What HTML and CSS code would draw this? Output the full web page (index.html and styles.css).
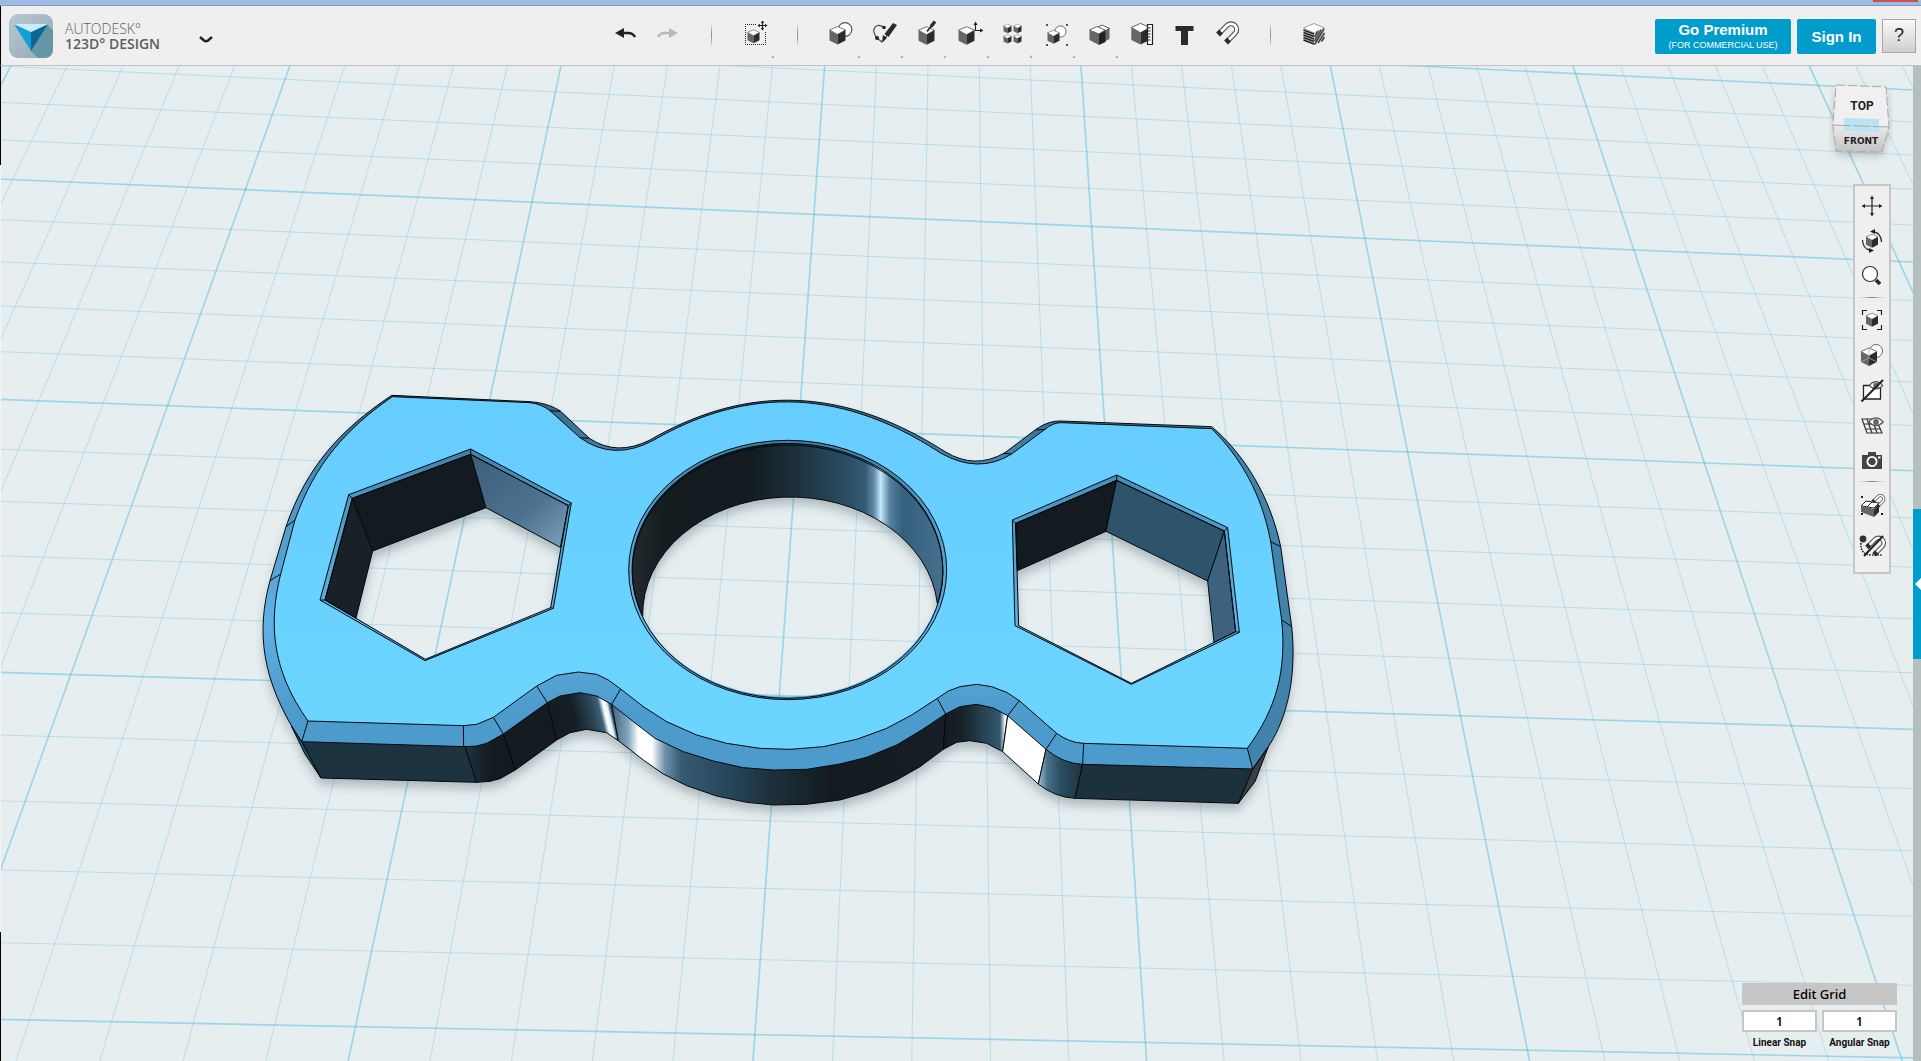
FILE: index.html
```html
<!DOCTYPE html>
<html lang="en">
<head>
<meta charset="utf-8">
<title>Autodesk 123D Design</title>
<link rel="stylesheet" href="styles.css">
</head>
<body>
<svg class="defs" aria-hidden="true">
  <defs>
    <g id="cube">
      <path d="M0-9 8-5.500 0-1-8-5.500Z" fill="#fff" stroke="#555" stroke-width=".8"/>
      <path d="M-8-5.500 0-1V9L-8 5Z" fill="#666"/>
      <path d="M8-5.500 0-1V9L8 5Z" fill="#2b2b2b"/>
    </g>
    <g id="eye">
      <path d="M-8 0Q0-9 8 0 0 8-8 0Z" fill="#fff" stroke="#555" stroke-width="1.300"/>
      <circle r="3.200" fill="#666"/>
    </g>
    <g id="magnet">
      <path d="M-8 4 0-4A5.600 5.600 0 0 1 8 4L0 12" fill="none" stroke="#555" stroke-width="5.200"/>
      <path d="M-8 4 0-4A5.600 5.600 0 0 1 8 4L0 12" fill="none" stroke="#fff" stroke-width="2.800"/>
      <path d="M-9 5-6 2M-1 13 2 10" stroke="#2b2b2b" stroke-width="5.400"/>
    </g>
    <path id="more" d="M41 44v3h-3Z" fill="#aaa"/>
  </defs>
</svg>

<div class="titlebar"><span class="close-edge"></span></div>

<header class="toolbar">
  <div class="brand">
    <svg class="logo" viewBox="0 0 44 44" aria-hidden="true">
      <defs><linearGradient id="lg" x1="0" y1="0" x2="1" y2="1"><stop offset="0" stop-color="#b9c8d0"/><stop offset="1" stop-color="#93a9b5"/></linearGradient></defs>
      <rect width="44" height="44" rx="9" fill="url(#lg)"/>
      <path d="M38 11 44 16V35Q44 44 35 44H29L21 36Z" fill="#6496a8"/>
      <path d="M5 10 22 18V37Z" fill="#129fd9"/>
      <path d="M39 10 22 18V37Z" fill="#0b6690"/>
      <path d="M5 10H39L22 18Z" fill="#c6ecf8"/>
    </svg>
    <div class="brand-text"><span class="maker">AUTODESK°</span><span class="product">123D° DESIGN</span></div>
    <button class="app-menu" aria-label="Application menu"><svg viewBox="0 0 14 7"><path d="M1 1 5 4.500Q7 6 9 4.500L13 1" fill="none" stroke="#222" stroke-width="2.400"/></svg></button>
  </div>

  <nav class="tools" aria-label="Tools">
    <button aria-label="Undo"><svg viewBox="0 0 43 50"><path d="M11 22 20 17V27Z" fill="#222"/><path d="M19 22H24Q29 22 31 26" fill="none" stroke="#222" stroke-width="2.600"/></svg></button>
    <button aria-label="Redo"><svg viewBox="0 0 43 50"><path d="M31 22 22 17V27Z" fill="#b8b8b8"/><path d="M23 22H18Q13 22 11 26" fill="none" stroke="#b8b8b8" stroke-width="2.600"/></svg></button>
    <span class="sep"></span>
    <button aria-label="Transform"><svg viewBox="0 0 43 50"><path d="M23 13.500H12.500V33.500H32.500V21" fill="none" stroke="#222" stroke-dasharray="1 1"/><use href="#cube" transform="translate(20.500 25.500) scale(.75)"/><path d="M29.500 10V19M25 14.500H34" stroke="#222" stroke-width="1.200"/><path d="M29.500 9.500 27.800 12H31.200ZM29.500 19.500 27.800 17H31.200ZM24.500 14.500 27 12.800V16.200ZM34.500 14.500 32 12.800V16.200Z" fill="#222"/><use href="#more"/></svg></button>
    <span class="sep"></span>
    <button aria-label="Primitives"><svg viewBox="0 0 43 50"><circle cx="26" cy="18.500" r="6.800" fill="#fff" stroke="#555" stroke-width="1.200"/><use href="#cube" transform="translate(18.500 24.500)"/><use href="#more"/></svg></button>
    <button aria-label="Sketch"><svg viewBox="0 0 43 50"><path d="M22 16Q14 12 12 18 11 22 15 27L20 31Q24 28 25 23" fill="none" stroke="#444" stroke-width="1.200"/><circle cx="22" cy="16.500" r="1.800" fill="#222"/><circle cx="15" cy="27" r="2" fill="#222"/><path d="M20 31 21 24 25 27Z" fill="#222"/><path d="M22.500 23 31 12 35 14 26.500 26Z" fill="#2b2b2b"/><use href="#more"/></svg></button>
    <button aria-label="Construct"><svg viewBox="0 0 43 50"><use href="#cube" transform="translate(21.500 24.700)"/><path d="M22 20.500 27 14.500" stroke="#222" stroke-width="1.600"/><path d="M26 15.500 30 10.500" stroke="#2b2b2b" stroke-width="3.400"/><use href="#more"/></svg></button>
    <button aria-label="Modify"><svg viewBox="0 0 43 50"><use href="#cube" transform="translate(18.500 24.700)"/><path d="M27.500 12V19.500H34" fill="none" stroke="#222" stroke-width="1.100"/><path d="M27.500 10.500 25.500 14H29.500ZM35.500 19.500 32 17.500V21.500Z" fill="#222"/><use href="#more"/></svg></button>
    <button aria-label="Pattern"><svg viewBox="0 0 43 50"><use href="#cube" transform="translate(16.500 17.700) scale(.5)"/><use href="#cube" transform="translate(26.500 17.700) scale(.5)"/><use href="#cube" transform="translate(16.500 28) scale(.5)"/><use href="#cube" transform="translate(26.500 28) scale(.5)"/><use href="#more"/></svg></button>
    <button aria-label="Grouping"><svg viewBox="0 0 43 50"><path d="M12 13h2v2h-2ZM32 13h2v2h-2ZM12 33h2v2h-2ZM32 33h2v2h-2Z" fill="#555"/><circle cx="26.500" cy="20.500" r="5.600" fill="#fff" stroke="#666"/><use href="#cube" transform="translate(19.500 26) scale(.75)"/><use href="#more"/></svg></button>
    <button aria-label="Combine"><svg viewBox="0 0 43 50"><path d="M19 17 25 14 32.500 17V28L25 32Z" fill="#666"/><path d="M18 17.500 25 14 32.500 17.500 26 20.500Z" fill="#fff" stroke="#444" stroke-width=".8"/><path d="M12.500 19 20 15.500 28 19 22 23Z" fill="#fff" stroke="#444" stroke-width=".8"/><path d="M12.500 19.500 22 23V34L12.500 29Z" fill="#666"/><path d="M22 23 28.500 20V31L22 34Z" fill="#222"/><use href="#more"/></svg></button>
    <button aria-label="Measure"><svg viewBox="0 0 43 50"><use href="#cube" transform="translate(20.500 23) scale(1.150 1.180)"/><path d="M27.500 13.500H32.500V33.500H27.500Z" fill="#fff" stroke="#222" stroke-width="1.200"/><path d="M28 17H30.500M28 20H30.500M28 23H30.500M28 26H30.500M28 29H30.500" stroke="#222"/></svg></button>
    <button aria-label="Text"><svg viewBox="0 0 43 50"><rect x="12.500" y="15" width="18" height="5" fill="#2b2b2b"/><rect x="18" y="19" width="7" height="15" fill="#2b2b2b"/></svg></button>
    <button aria-label="Snap"><svg viewBox="0 0 43 50"><use href="#magnet" transform="translate(21 18.500)"/></svg></button>
    <span class="sep"></span>
    <button aria-label="Material"><svg viewBox="0 0 43 50"><path d="M11.500 17 22 12.500 32.500 17 22 22Z" fill="#fff" stroke="#888" stroke-width=".8"/><path d="M11.500 18 22 22V34L11.500 29Z" fill="#ccc"/><path d="M22 22 32.500 18V29L22 34Z" fill="#ddd"/><path d="M11.500 19 22 23M11.500 21.500 22 25.500M11.500 24 22 28M11.500 26.500 22 30.500M11.500 29 22 33" stroke="#222" stroke-width="1.400"/><path d="M22.500 26 26 20M22.500 30 29 19M22.500 33.500 32 18M26 32 32.500 22M29.500 30.500 32.500 26" stroke="#444" stroke-width="1.500"/></svg></button>
  </nav>

  <div class="account">
    <button class="cta premium"><span>Go Premium</span><small>(FOR COMMERCIAL USE)</small></button>
    <button class="cta signin">Sign In</button>
    <button class="help" aria-label="Help">?</button>
  </div>
</header>

<main class="workspace">
  <div class="canvas">
    <svg class="scene" viewBox="0 198 5739 2985" preserveAspectRatio="xMidYMid slice" role="img" aria-label="Model on the work plane">
      <defs>
        <linearGradient id="rim" gradientUnits="userSpaceOnUse" x1="0" y1="1200" x2="0" y2="2300"><stop offset="0" stop-color="#35698a"/><stop offset=".25" stop-color="#4d92bf"/><stop offset=".6" stop-color="#60b1e4"/><stop offset=".85" stop-color="#4d9bcc"/></linearGradient>
        <linearGradient id="face" x1="0" y1="0" x2="0" y2="1"><stop offset="0" stop-color="#66cdff"/><stop offset="1" stop-color="#6cd5ff"/></linearGradient>
        <linearGradient id="hexShine" x1="0" y1="0" x2="1" y2="1"><stop offset="0" stop-color="#3c5f79"/><stop offset=".6" stop-color="#4d7290"/><stop offset="1" stop-color="#7ba2bf"/></linearGradient>
        <linearGradient id="bore"><stop offset="0" stop-color="#242b2d"/><stop offset=".1" stop-color="#161d21"/><stop offset=".38" stop-color="#131b20"/><stop offset=".5" stop-color="#1b2c36"/><stop offset=".66" stop-color="#28485b"/><stop offset=".75" stop-color="#345a74"/><stop offset=".78" stop-color="#6690ae"/><stop offset=".8" stop-color="#c4e8fa"/><stop offset=".83" stop-color="#55809e"/><stop offset=".87" stop-color="#34607c"/><stop offset="1" stop-color="#47708f"/></linearGradient>
        <linearGradient id="w2"><stop offset="0" stop-color="#1e3442"/><stop offset=".5" stop-color="#131b20"/></linearGradient>
        <linearGradient id="w4" gradientUnits="userSpaceOnUse" x1="1642" y1="2190" x2="1856" y2="2140"><stop offset="0" stop-color="#131b20"/><stop offset=".4" stop-color="#151f25"/><stop offset=".65" stop-color="#294656"/><stop offset=".76" stop-color="#3d6078"/><stop offset=".82" stop-color="#fff"/><stop offset=".87" stop-color="#dff3ff"/><stop offset=".91" stop-color="#31536a"/><stop offset="1" stop-color="#31536a"/></linearGradient>
        <linearGradient id="w5"><stop offset="0" stop-color="#41647c"/><stop offset=".05" stop-color="#84a8bf"/><stop offset=".08" stop-color="#fff"/><stop offset=".12" stop-color="#fff"/><stop offset=".16" stop-color="#6c91aa"/><stop offset=".21" stop-color="#365a72"/><stop offset=".35" stop-color="#27465a"/><stop offset=".48" stop-color="#1d303b"/><stop offset=".65" stop-color="#131b20"/><stop offset="1" stop-color="#181e26"/></linearGradient>
        <linearGradient id="w6"><stop offset="0" stop-color="#131b20"/><stop offset=".3" stop-color="#172229"/><stop offset=".6" stop-color="#25404f"/><stop offset=".88" stop-color="#34586f"/><stop offset=".96" stop-color="#f4fbff"/></linearGradient>
        <linearGradient id="w8"><stop offset="0" stop-color="#9fc6e0"/><stop offset=".2" stop-color="#4a7089"/><stop offset=".5" stop-color="#2b4d62"/><stop offset="1" stop-color="#1e3340"/></linearGradient>
        <filter id="shadow" x="-10%" y="-10%" width="120%" height="125%"><feDropShadow dx="0" dy="22" stdDeviation="14" flood-color="#3a4850" flood-opacity=".3"/></filter>
      </defs>

      <g id="grid" class="grid"></g>

      <g class="model">
        <path class="body" filter="url(#shadow)" fill="url(#rim)" fill-rule="evenodd" d="M1175 1186 1590 1205Q1640 1208 1680 1232L1768 1315Q1850 1370 1950 1320C2210 1170 2500 1140 2835 1355Q2925 1410 3015 1358L3108 1288Q3145 1262 3180 1263L3635 1280C3735 1365 3810 1490 3842 1640L3875 1880C3890 2020 3865 2150 3805 2240L3765 2345 3715 2410 3225 2395Q3165 2392 3115 2352L3008 2255 2960 2230 2910 2222 2870 2227 2830 2248 2760 2300 2690 2340 2610 2374 2520 2400 2420 2413 2320 2415 2240 2407 2150 2388 2060 2357 1990 2322 1930 2280 1855 2222 1820 2198 1760 2188 1710 2198 1670 2220 1546 2310 1500 2336 1470 2344 1430 2347 963 2334 910 2255 890 2205C785 2040 770 1890 810 1742L858 1580C920 1400 1020 1290 1175 1186Z
          M1458 1523 1681 1642 1652 1823 1276 1976 1068 1854 1118 1653Z
          M3318 1594 3623 1743 3642 1927 3394 2050 3056 1877 3052 1712Z
          M1928 1848A443 352 0 0 1 2812 1810 466 380 0 0 1 1928 1848Z"/>
        <path fill="#4283ac" d="M3635 1280C3735 1365 3810 1490 3842 1640L3875 1880C3890 2020 3865 2150 3805 2240L3758 2307 3742 2245C3830 2125 3860 2010 3845 1860L3812 1625C3785 1480 3720 1370 3635 1286Z"/>
        <g class="edge">
          <path fill="#1e3340" d="M905 2225 1395 2240 1430 2347 963 2334Z"/>
          <path fill="#2a5570" d="M875 2180 905 2225 963 2334 915 2262Z"/>
          <path fill="url(#w2)" d="M1395 2240 1430 2238 1460 2230 1510 2202 1546 2310 1500 2336 1470 2344 1430 2347Z"/>
          <path fill="#131b20" d="M1510 2202 1642 2108 1670 2220 1546 2310Z"/>
          <path fill="url(#w4)" d="M1642 2108 1680 2088 1740 2078 1790 2088 1835 2113 1855 2222 1820 2198 1760 2188 1710 2198 1670 2220Z"/>
          <path fill="url(#w5)" d="M1835 2113 1900 2165 1965 2215 2050 2255 2140 2283 2230 2303 2320 2310 2420 2308 2520 2292 2600 2272 2690 2235 2765 2190 2837 2142 2830 2248 2760 2300 2690 2340 2610 2374 2520 2400 2420 2413 2320 2415 2240 2407 2150 2388 2060 2357 1990 2322 1930 2280 1855 2222Z"/>
          <path fill="url(#w6)" d="M2837 2142 2880 2120 2930 2113 2980 2124 3023 2147 3008 2255 2960 2230 2910 2222 2870 2227 2830 2248Z"/>
          <path fill="#fff" d="M3023 2147 3138 2248 3115 2352 3008 2255Z"/>
          <path fill="url(#w8)" d="M3138 2248Q3190 2291 3248 2293L3225 2395Q3165 2392 3115 2352Z"/>
          <path fill="#1d313d" d="M3248 2293 3758 2307 3715 2410 3225 2395Z"/>
          <path fill="#3a3f42" d="M3758 2307 3805 2240 3765 2345 3715 2410Z"/>

          <path fill="#131b20" d="M1412 1363 1458 1523 1118 1653 1057 1495Z"/>
          <path fill="#182127" d="M1057 1495 1118 1653 1068 1854 975 1800Z"/>
          <path fill="url(#hexShine)" d="M1412 1363 1458 1523 1681 1642 1705 1517Z"/>
          <path fill="#131b20" d="M3350 1441 3318 1594 3052 1712 3047 1570Z"/>
          <path fill="#2e546c" d="M3350 1441 3673 1593 3623 1743 3318 1594Z"/>
          <path fill="#3c6280" d="M3673 1593 3707 1895 3642 1927 3623 1743Z"/>
          <path fill="url(#bore)" d="M1928 1848A466 380 0 1 1 2812 1810 443 352 0 0 0 1928 1848Z"/>

          <path fill="url(#face)" fill-rule="evenodd" d="M1177 1190 1590 1208Q1625 1212 1650 1232L1740 1313Q1840 1385 1960 1321C2215 1174 2500 1148 2820 1358Q2935 1424 3035 1362L3135 1288Q3160 1267 3185 1268L3635 1286C3720 1370 3785 1480 3812 1625L3845 1860C3860 2010 3830 2125 3742 2245L3250 2230Q3208 2228 3170 2200L3058 2102 3020 2077 2975 2060 2930 2053 2880 2060 2845 2073 2812 2095 2735 2145 2660 2185 2570 2218 2470 2240 2370 2248 2280 2245 2180 2230 2090 2205 2000 2165 1930 2120 1862 2067 1825 2040 1790 2023 1735 2016 1670 2026 1610 2058 1480 2152 1430 2173 1390 2177 924 2163C815 2010 805 1870 842 1722L885 1560C945 1390 1040 1285 1177 1190Z
            M1412 1347 1714 1509 1660 1825 1275 1982 960 1800 1046 1484Z
            M3350 1425 3683 1583 3718 1897 3394 2053 3045 1877 3037 1560Z
            M1886 1710A477 389 0 1 1 2840 1710 477 389 0 1 1 1886 1710Z"/>

          <path fill="none" d="M905 2225C780 2040 770 1890 810 1742L858 1580C920 1400 1020 1290 1175 1186L1590 1205Q1640 1208 1680 1232L1768 1315Q1850 1370 1950 1320C2210 1170 2500 1140 2835 1355Q2925 1410 3015 1358L3108 1288Q3145 1262 3180 1263L3635 1280C3735 1365 3810 1490 3842 1640L3875 1880C3890 2020 3865 2150 3805 2240L3758 2307"/>
          <path fill="none" d="M1412 1363 1705 1517 1652 1823 1276 1978 975 1800 1057 1495ZM3350 1441 3673 1593 3707 1895 3394 2050 3056 1877 3047 1570Z"/>
          <ellipse fill="none" cx="2363" cy="1715" rx="466" ry="380"/>
          <path fill="none" d="M924 2163 905 2225M1390 2177 1391 2240M1480 2152 1510 2202M1610 2058 1642 2108M1862 2067 1835 2113M2812 2095 2837 2142M3058 2102 3023 2147M3170 2200 3138 2248M3251 2230 3248 2293M3742 2245 3758 2307M842 1722 810 1742M885 1560 858 1580M3812 1625 3842 1640M3845 1860 3875 1880M1650 1232 1680 1234M1740 1313 1768 1315M3035 1362 3012 1360M3135 1288 3108 1290M1412 1347V1363M1046 1484 1057 1495M960 1800H975M1714 1509 1705 1517M1660 1825 1652 1823M3350 1425V1441M3683 1583 3673 1593M3718 1897 3707 1895M3037 1560 3047 1570"/>
        </g>
      </g>
    </svg>

    <svg class="viewcube" viewBox="0 0 64 84" role="img" aria-label="View cube">
      <defs>
        <linearGradient id="vc" x1="0" y1="0" x2="0" y2="1"><stop offset="0" stop-color="#ececec"/><stop offset="1" stop-color="#c2c2c2"/></linearGradient>
        <filter id="vs" x="-20%" y="-20%" width="140%" height="150%"><feDropShadow dx="0" dy="4" stdDeviation="4" flood-opacity=".2"/></filter>
      </defs>
      <path filter="url(#vs)" d="M7 5 57 7 60 47 53 72 7 71 4 45Z" fill="#ccc"/>
      <path d="M7 5 57 7 60 47 4 45Z" fill="#f0f0f0"/>
      <path d="M4 45 60 47 53 72 7 71Z" fill="url(#vc)"/>
      <path d="M15 38 50 39V52L15 51Z" fill="#b9e4f2"/>
      <path d="M7 5 57 7 60 47 53 72 7 71 4 45Z" fill="none" stroke="#aaa" stroke-dasharray="9 3"/>
      <path d="M4 45 60 47" stroke="#aaa" stroke-dasharray="18 2"/>
      <text class="top" x="33" y="30">TOP</text>
      <text class="front" x="32" y="64">FRONT</text>
    </svg>

    <div class="navbar" role="toolbar" aria-label="Navigation">
      <button aria-label="Pan"><svg viewBox="-17 -17 34 34"><path d="M0-8V8M-8 0H8" stroke="#222" stroke-width="1.200"/><path d="M0-10.500-2-7H2ZM0 10.500-2 7H2ZM-10.500 0-7-2V2ZM10.500 0 7-2V2Z" fill="#222"/></svg></button>
      <button aria-label="Orbit"><svg viewBox="-17 -17 34 34"><use href="#cube" transform="scale(.75)"/><path d="M2-9Q9-8 9.500 1M-2 9Q-9 8-9.500-1" fill="none" stroke="#333" stroke-width="1.300"/><path d="M-2-9.500 3-12V-7ZM2 9.500-3 7V12Z" fill="#222"/></svg></button>
      <button aria-label="Zoom"><svg viewBox="-17 -17 34 34"><circle cx="-2" cy="-2" r="7.500" fill="#fff" stroke="#333" stroke-width="1.200"/><path d="M4 4 8 8" stroke="#2b2b2b" stroke-width="3.800"/></svg></button>
      <span class="rule"></span>
      <button aria-label="Fit"><svg viewBox="-17 -17 34 34"><path d="M-9.500-5V-9.500H-5M5-9.500H9.500V-5M9.500 5V9.500H5M-5 9.500H-9.500V5" fill="none" stroke="#222" stroke-width="1.200"/><use href="#cube" transform="scale(.75)"/></svg></button>
      <button aria-label="Shading"><svg viewBox="-17 -17 34 34"><circle cx="4" cy="-4" r="6.500" fill="#fff" stroke="#666"/><use href="#cube" transform="translate(-3 2)"/><path d="M-11 7-3 3 5 7M-3 3V-7" fill="none" stroke="#aaa" stroke-width=".8"/></svg></button>
      <button aria-label="Solid visibility"><svg viewBox="-17 -17 34 34"><path d="M-8.500-4.500H8.500V9H-8.500Z" fill="#fff" stroke="#222" stroke-width="1.300"/><use href="#eye" transform="translate(4 -4.500) scale(.85)"/><path d="M-10.500 11.500 11-10" stroke="#222" stroke-width="2"/></svg></button>
      <button aria-label="Grid visibility"><svg viewBox="-17 -17 34 34"><path d="M-10-6H4L10 8H-5ZM-8-1H8M-6 4H9M-5-6 0 8M0-6 5 8" fill="none" stroke="#333" stroke-width="1.200"/><use href="#eye" transform="translate(4 -3) scale(.9)"/></svg></button>
      <button aria-label="Screenshot"><svg viewBox="-17 -17 34 34"><path d="M-10-5H-4V-8H4V-5H10V9H-10Z" fill="#444"/><circle cy="1.500" r="4.600" fill="#444" stroke="#fff" stroke-width="1.800"/><rect x="6" y="-3.500" width="2.500" height="2" fill="#fff"/></svg></button>
      <span class="rule"></span>
      <button class="tall" aria-label="Object snap"><svg viewBox="-17 -17 34 34"><path d="M-11-10h2v2h-2ZM-11 7h2v2h-2ZM9 7h2v2H9Z" fill="#222"/><path d="M-11 0-6-5 7-3 2 2Z" fill="#fff" stroke="#222"/><path d="M-5 1 0-4" stroke="#222"/><path d="M-11 0 2 3V11L-11 6Z" fill="#666"/><path d="M2 3 7-2V6L2 11Z" fill="#2b2b2b"/><use href="#magnet" transform="translate(6 -7) scale(.6)"/></svg></button>
      <button class="tall" aria-label="Disable snap"><svg viewBox="-17 -17 34 34"><circle cx="-9" cy="-7" r="3.400" fill="#333"/><path d="M-11-3Q-12 9 0 9H10" fill="none" stroke="#222" stroke-width="1.600" stroke-dasharray="1.500 1.200"/><use href="#magnet" transform="translate(3 -3) scale(.9)"/><path d="M-8 10 11-10" stroke="#222" stroke-width="2"/></svg></button>
    </div>

    <section class="snap" aria-label="Grid settings">
      <button class="edit-grid">Edit Grid</button>
      <div class="fields">
        <div class="field"><input id="linear" type="text" value="1"><label for="linear">Linear Snap</label></div>
        <div class="field"><input id="angular" type="text" value="1"><label for="angular">Angular Snap</label></div>
      </div>
    </section>
  </div>

  <aside class="drawer"><button aria-label="Open parts library"><svg viewBox="0 0 6 12"><path d="M6 0V12L0 6Z" fill="#fff"/></svg></button></aside>
</main>
<script src="grid.js"></script>
</body>
</html>
```
FILE: styles.css
```css
* { box-sizing: border-box; }

html, body { height: 100%; }

body {
  margin: 0;
  display: flex;
  flex-direction: column;
  overflow: hidden;
  background: #e6eef0;
  color: #111;
  font-family: "Liberation Sans", Arial, sans-serif;
}

button {
  border: 0;
  padding: 0;
  background: none;
  font-family: inherit;
  cursor: pointer;
}

svg { display: block; }

.defs { position: absolute; width: 0; height: 0; }

/* window frame */
.titlebar {
  flex: none;
  height: 6px;
  display: flex;
  justify-content: flex-end;
  padding-right: 3px;
  background: #9fb9e2;
  border-bottom: 1px solid #7f9bc2;
}

.close-edge { width: 45px; height: 2px; background: #c9504f; }

/* toolbar */
.toolbar {
  flex: none;
  height: 60px;
  display: grid;
  grid-template-columns: 1fr auto 1fr;
  align-items: center;
  padding: 0 5px 0 8px;
  background: #efefef;
  border-bottom: 1px solid #c2c2c2;
  border-left: 1px solid #000;
}

.brand { display: flex; align-items: center; }

.logo { width: 44px; height: 44px; }

.brand-text {
  display: flex;
  flex-direction: column;
  margin-left: 12px;
  width: 100px;
  color: #5f5f5f;
  font-family: "Open Sans", "Noto Sans", sans-serif;
  font-size: 14px;
  line-height: 15px;
  white-space: nowrap;
}

.maker { font-weight: 300; }
.product { font-weight: 600; }

.app-menu { margin-left: 34px; padding-top: 8px; }
.app-menu svg { width: 14px; height: 7px; }

.tools { display: flex; align-items: center; margin-left: 14px; padding-top: 1px; }
.tools button, .tools .sep { width: 43px; height: 50px; }
.tools button svg { width: 43px; height: 50px; }

.sep {
  background: linear-gradient(transparent, #888 50%, transparent) center 11px / 1px 26px no-repeat;
}

.account { display: flex; justify-content: flex-end; gap: 6px; padding-top: 1px; }

.cta {
  height: 35px;
  border-radius: 2px;
  background: #009ccc;
  color: #fff;
  font-size: 15px;
  font-weight: 700;
}

.premium {
  width: 136px;
  display: flex;
  flex-direction: column;
  align-items: center;
  justify-content: center;
  line-height: 17px;
}

.premium small { font-size: 9px; font-weight: 400; line-height: 14px; white-space: nowrap; }
.signin { width: 79px; }

.help {
  width: 34px;
  height: 34px;
  border: 1px solid #a8a8a8;
  background: linear-gradient(#fafafa, #cfcfcf);
  color: #222;
  font-size: 18px;
}

/* workspace */
.workspace { flex: 1; min-height: 0; display: flex; }

.canvas { position: relative; flex: 1; min-width: 0; overflow: hidden; }

/* window edge, hidden along the middle of the canvas */
.canvas::before {
  content: "";
  position: absolute;
  top: 0;
  bottom: 0;
  left: 0;
  width: 1px;
  background: linear-gradient(#000 10%, #f4f4f4 10% 87%, #000 87%);
}

.scene { width: 100%; height: 100%; }

.grid line { stroke: #36b4dc; stroke-opacity: .27; stroke-width: 3; }
.grid line.major { stroke-opacity: .42; stroke-width: 5; }

.edge path, .edge ellipse {
  stroke: #04090c;
  stroke-width: 3;
  stroke-linejoin: round;
}

.viewcube {
  position: absolute;
  top: 14px;
  right: 20px;
  width: 64px;
  height: 84px;
}

.viewcube text { text-anchor: middle; fill: #222; }
.viewcube .top { font: 700 12px Roboto, sans-serif; }
.viewcube .front { font: 700 9px "DejaVu Sans", sans-serif; }

.navbar {
  position: absolute;
  top: 118px;
  right: 22px;
  width: 38px;
  padding: 2px 0 6px;
  display: flex;
  flex-direction: column;
  border: 2px solid #c6c6c6;
  background: #efefef;
}

.navbar button { height: 35px; display: grid; place-items: center; }
.navbar .tall { height: 40px; }
.navbar svg { width: 34px; height: 34px; }

.rule {
  height: 9px;
  background: linear-gradient(90deg, transparent, #888, transparent) center / 26px 1px no-repeat;
}

.snap {
  position: absolute;
  right: 16px;
  bottom: 12px;
  width: 155px;
  display: flex;
  flex-direction: column;
  gap: 5px;
}

.edit-grid {
  height: 22px;
  background: #c6c6c6;
  color: #000;
  font: 500 13px "Noto Sans", sans-serif;
}

.fields { display: flex; gap: 5px; }

.field {
  flex: 1;
  min-width: 0;
  display: flex;
  flex-direction: column;
  align-items: center;
  gap: 5px;
}

.field input {
  width: 100%;
  height: 22px;
  border: 2px solid #c6c6c6;
  padding: 0;
  background: #fff;
  color: #000;
  text-align: center;
  font: 600 12px "Noto Sans", sans-serif;
}

.field label { font: 700 10px/12px Roboto, sans-serif; }

/* collapsed side drawer */
.drawer {
  flex: none;
  width: 8px;
  display: flex;
  align-items: center;
  padding-top: 40px;
  background: #b5bfbd;
}

.drawer button {
  width: 8px;
  height: 150px;
  display: grid;
  place-items: center end;
  background: #009ccc;
}

.drawer svg { width: 6px; height: 12px; }
```
FILE: grid.js
```js
// Draws the work plane: a flat grid seen in perspective.
// The quad is four by three major cells, each split in five.
const quad = [[531.9, 202.1], [1633.9, 249.9], [1901.2, 1057.7], [355.5, 1026.6]];
const [[x0, y0], [x1, y1], [x2, y2], [x3, y3]] = quad;
const dx1 = x1 - x2, dx2 = x3 - x2, dx3 = x0 - x1 + x2 - x3;
const dy1 = y1 - y2, dy2 = y3 - y2, dy3 = y0 - y1 + y2 - y3;
const det = dx1 * dy2 - dy1 * dx2;
const g = (dx3 * dy2 - dx2 * dy3) / det;
const h = (dx1 * dy3 - dy1 * dx3) / det;

function project(u, v) {
  const w = g * u + h * v + 1;
  return [
    3 * ((x1 - x0 + g * x1) * u + (x3 - x0 + h * x3) * v + x0) / w,
    3 * ((y1 - y0 + g * y1) * u + (y3 - y0 + h * y3) * v + y0) / w
  ];
}

const layer = document.getElementById('grid');

function addLine(from, to, major) {
  const line = document.createElementNS('http://www.w3.org/2000/svg', 'line');
  line.setAttribute('x1', from[0]);
  line.setAttribute('y1', from[1]);
  line.setAttribute('x2', to[0]);
  line.setAttribute('y2', to[1]);
  if (major) line.setAttribute('class', 'major');
  layer.appendChild(line);
}

for (let i = -20; i <= 36; i++) addLine(project(i / 20, -0.8), project(i / 20, 1.4), i % 5 === 0);
for (let j = -12; j <= 18; j++) addLine(project(-1.2, j / 15), project(2, j / 15), j % 5 === 0);
```
